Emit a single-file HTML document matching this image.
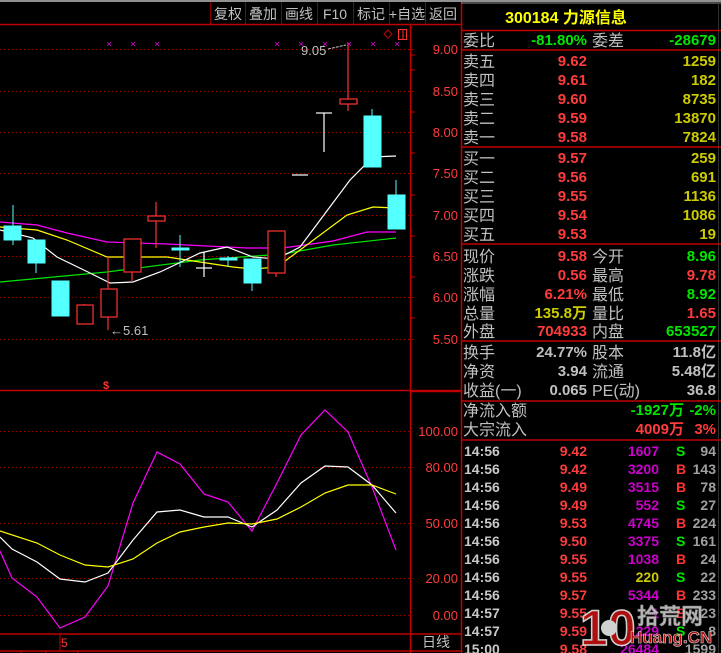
<!DOCTYPE html>
<html><head><meta charset="utf-8"><style>
html,body{margin:0;padding:0;background:#000;width:721px;height:653px;overflow:hidden}
svg{display:block}
text{font-family:"Liberation Sans","Noto Sans CJK SC",sans-serif}
.ax{fill:#ff3c3c;font-size:13px;text-anchor:end}
.lb{fill:#c0c0c0;font-size:16px}
.r{fill:#ff3c3c;font-size:15px;font-weight:bold;text-anchor:end}
.g{fill:#00e600;font-size:15px;font-weight:bold;text-anchor:end}
.y{fill:#cccc00;font-size:15px;font-weight:bold;text-anchor:end}
.w{fill:#c0c0c0;font-size:15px;font-weight:bold;text-anchor:end}
.t{fill:#c8c8c8;font-size:14px;font-weight:bold}
.tr{fill:#ff3c3c;font-size:14px;font-weight:bold;text-anchor:end}
.tp{fill:#cc00cc;font-size:14px;font-weight:bold;text-anchor:end}
.tw{fill:#a0a0a0;font-size:14px;font-weight:bold;text-anchor:end}
.tb{font-size:14px;font-weight:bold}
.tb2{fill:#c0c0c0;font-size:14px;text-anchor:middle}
</style></head><body>
<svg width="721" height="653" viewBox="0 0 721 653" xmlns="http://www.w3.org/2000/svg">
<rect width="721" height="653" fill="#000"/>
<line x1="0" y1="1" x2="721" y2="1" stroke="#909090" stroke-width="2"/>
<g stroke="#8a0000" stroke-width="1">
<line x1="210.5" y1="2" x2="210.5" y2="24"/><line x1="245.5" y1="2" x2="245.5" y2="24"/><line x1="281.5" y1="2" x2="281.5" y2="24"/><line x1="317.5" y1="2" x2="317.5" y2="24"/><line x1="353.5" y1="2" x2="353.5" y2="24"/><line x1="389.5" y1="2" x2="389.5" y2="24"/><line x1="425.5" y1="2" x2="425.5" y2="24"/>
</g>
<g class="tb2"><text x="228" y="19">复权</text><text x="263" y="19">叠加</text><text x="299" y="19">画线</text><text x="335" y="19">F10</text><text x="371" y="19">标记</text><text x="407" y="19">+自选</text><text x="443" y="19">返回</text></g>
<line x1="0" y1="24.5" x2="461" y2="24.5" stroke="#c00000" stroke-width="1.5"/>
<g stroke="#c00000" stroke-width="1.5" fill="none">
<line x1="410.5" y1="25" x2="410.5" y2="653"/>
<line x1="461.5" y1="2" x2="461.5" y2="653"/>
<line x1="0" y1="390.5" x2="410" y2="390.5"/>
<line x1="410" y1="391" x2="461" y2="391" stroke-width="2.5"/>
<line x1="0" y1="634" x2="461" y2="634"/>
<line x1="0" y1="651" x2="461" y2="651"/>
</g>
<g stroke="#c00000" stroke-width="1">
<line x1="410" y1="55" x2="415" y2="55"/><line x1="410" y1="70" x2="415" y2="70"/><line x1="410" y1="112" x2="415" y2="112"/><line x1="410" y1="153" x2="415" y2="153"/><line x1="410" y1="195" x2="415" y2="195"/><line x1="410" y1="236" x2="415" y2="236"/><line x1="410" y1="277" x2="415" y2="277"/><line x1="410" y1="318" x2="415" y2="318"/>
<line x1="21" y1="651" x2="21" y2="653"/><line x1="46" y1="651" x2="46" y2="653"/><line x1="78" y1="651" x2="78" y2="653"/>
</g>
<g stroke="#a00000" stroke-width="1" stroke-dasharray="1,3">
<line x1="0" y1="49.5" x2="415" y2="49.5"/><line x1="0" y1="91.5" x2="415" y2="91.5"/><line x1="0" y1="132.5" x2="415" y2="132.5"/><line x1="0" y1="173.5" x2="415" y2="173.5"/><line x1="0" y1="215.5" x2="415" y2="215.5"/><line x1="0" y1="256.5" x2="415" y2="256.5"/><line x1="0" y1="297.5" x2="415" y2="297.5"/><line x1="0" y1="339.5" x2="415" y2="339.5"/>
<line x1="0" y1="431.5" x2="410" y2="431.5"/><line x1="0" y1="467.5" x2="410" y2="467.5"/><line x1="0" y1="523.5" x2="410" y2="523.5"/><line x1="0" y1="578.5" x2="410" y2="578.5"/><line x1="0" y1="615.5" x2="410" y2="615.5"/>
</g>
<g class="ax">
<text x="458" y="54">9.00</text><text x="458" y="96">8.50</text><text x="458" y="137">8.00</text><text x="458" y="178">7.50</text><text x="458" y="220">7.00</text><text x="458" y="261">6.50</text><text x="458" y="302">6.00</text><text x="458" y="344">5.50</text>
<text x="458" y="436">100.00</text><text x="458" y="472">80.00</text><text x="458" y="528">50.00</text><text x="458" y="583">20.00</text><text x="458" y="620">0.00</text>
</g>
<text x="436" y="647" class="tb2">日线</text>
<text x="61" y="647" fill="#ff3c3c" font-size="12">5</text>
<line x1="60" y1="634" x2="60" y2="651" stroke="#c00000"/>
<g fill="none" stroke-width="1.2">
<polyline stroke="#ff00ff" points="0,222 37,225 67,233 107,242 167,244 247,248 283,248 333,241 367,232 396,232"/>
<polyline stroke="#00e600" points="0,282 107,272 200,260 283,254 333,245 396,238"/>
<polyline stroke="#ffff00" points="0,227 37,230 67,240 107,257 167,257 200,262 233,267 253,269 277,267 300,250 347,215 373,207 396,208"/>
<polyline stroke="#ffffff" points="0,230 33,238 57,257 90,273 110,283 133,282 160,272 200,253 227,247 253,257 277,259 300,247 350,180 373,157 396,156"/>
</g>
<g stroke="#54ffff" fill="#54ffff">
<line x1="13" y1="205" x2="13" y2="245"/><rect x="4" y="226" width="17" height="14"/>
<line x1="36" y1="240" x2="36" y2="273"/><rect x="28" y="240" width="17" height="23"/>
<rect x="52" y="281" width="17" height="35"/>
<line x1="180" y1="235" x2="180" y2="267"/><rect x="172" y="248" width="17" height="2"/>
<line x1="228" y1="256" x2="228" y2="267"/><rect x="220" y="258" width="17" height="2"/>
<line x1="252" y1="259" x2="252" y2="291"/><rect x="244" y="259" width="17" height="24"/>
<line x1="372" y1="109" x2="372" y2="167"/><rect x="364" y="116" width="17" height="51"/>
<line x1="396" y1="180" x2="396" y2="229"/><rect x="388" y="195" width="17" height="34"/>
</g>
<g stroke="#ff3232" fill="#000" stroke-width="1.2">
<line x1="84" y1="304" x2="84" y2="306"/><rect x="77" y="305" width="16" height="19"/>
<line x1="108" y1="257" x2="108" y2="330"/><rect x="101" y="289" width="16" height="28"/>
<line x1="132" y1="272" x2="132" y2="281"/><rect x="124" y="239" width="17" height="33"/>
<line x1="156" y1="202" x2="156" y2="248"/><rect x="148" y="216" width="17" height="5"/>
<line x1="276" y1="273" x2="276" y2="277"/><rect x="268" y="231" width="17" height="42"/>
<line x1="348" y1="43" x2="348" y2="111"/><rect x="340" y="99" width="17" height="5"/>
</g>
<g stroke="#fff" stroke-width="1.2">
<line x1="196" y1="268" x2="212" y2="268"/><line x1="204" y1="252" x2="204" y2="277"/>
<line x1="292" y1="175" x2="308" y2="175"/>
<line x1="316" y1="113" x2="332" y2="113"/><line x1="324" y1="113" x2="324" y2="152"/>
</g>
<g fill="#ff00ff" font-size="9" text-anchor="middle">
<text x="109" y="47">×</text><text x="133" y="47">×</text><text x="157" y="47">×</text><text x="277" y="47">×</text><text x="301" y="47">×</text><text x="325" y="47">×</text><text x="349" y="47">×</text><text x="373" y="47">×</text><text x="397" y="47">×</text>
</g>
<text x="301" y="55" fill="#c0c0c0" font-size="13">9.05</text>
<line x1="328" y1="49" x2="346" y2="45" stroke="#c0c0c0" stroke-dasharray="3,1"/>
<path d="M384 34 L388 30 L392 34 L388 38 Z" fill="none" stroke="#c00000"/>
<rect x="398.5" y="29.5" width="8" height="10" fill="none" stroke="#ff3232"/>
<line x1="403" y1="30" x2="403" y2="39" stroke="#ff3232"/>
<text x="110" y="335" fill="#c0c0c0" font-size="13">←5.61</text>
<text x="103" y="389" fill="#ff3232" font-size="11" font-weight="bold">$</text>
<g fill="none" stroke-width="1.2">
<polyline stroke="#ff00ff" points="0,551 12,578 37,597 60,628 85,617 108,586 133,503 157,452 180,464 204,494 228,502 252,531 277,483 301,435 325,410 348,432 372,487 396,550"/>
<polyline stroke="#ffffff" points="0,537 12,549 37,562 60,579 85,582 108,573 133,540 157,512 180,510 204,517 228,517 252,527 277,510 301,483 325,466 348,467 372,485 396,513"/>
<polyline stroke="#ffff00" points="0,531 37,543 60,555 85,565 108,567 133,559 157,543 180,532 204,527 228,523 252,524 277,519 301,507 325,493 348,485 372,485 396,494"/>
</g>
<line x1="461" y1="3" x2="721" y2="3" stroke="#909090"/>
<line x1="718.5" y1="3" x2="718.5" y2="653" stroke="#303030"/>
<text x="566" y="23" fill="#ffff00" font-size="16" font-weight="bold" text-anchor="middle">300184 力源信息</text>
<g stroke="#c00000" stroke-width="1.5">
<line x1="461" y1="30.5" x2="721" y2="30.5"/><line x1="461" y1="50" x2="721" y2="50"/><line x1="461" y1="147" x2="721" y2="147"/><line x1="461" y1="244" x2="721" y2="244"/><line x1="461" y1="341" x2="721" y2="341"/><line x1="461" y1="401" x2="721" y2="401"/><line x1="461" y1="440" x2="721" y2="440"/>
</g>
<g class="lb">
<text x="463" y="46">委比</text><text x="592" y="46">委差</text>
<text x="463" y="67">卖五</text><text x="463" y="86">卖四</text><text x="463" y="105">卖三</text><text x="463" y="124">卖二</text><text x="463" y="143">卖一</text>
<text x="463" y="164">买一</text><text x="463" y="183">买二</text><text x="463" y="202">买三</text><text x="463" y="221">买四</text><text x="463" y="240">买五</text>
<text x="463" y="262">现价</text><text x="592" y="262">今开</text>
<text x="463" y="281">涨跌</text><text x="592" y="281">最高</text>
<text x="463" y="300">涨幅</text><text x="592" y="300">最低</text>
<text x="463" y="319">总量</text><text x="592" y="319">量比</text>
<text x="463" y="337">外盘</text><text x="592" y="337">内盘</text>
<text x="463" y="358">换手</text><text x="592" y="358">股本</text>
<text x="463" y="377">净资</text><text x="592" y="377">流通</text>
<text x="463" y="396">收益(一)</text><text x="592" y="396">PE(动)</text>
<text x="463" y="416">净流入额</text><text x="463" y="435">大宗流入</text>
</g>
<text x="587" y="45" class="g">-81.80%</text><text x="716" y="45" class="g">-28679</text>
<g class="r"><text x="587" y="66">9.62</text><text x="587" y="85">9.61</text><text x="587" y="104">9.60</text><text x="587" y="123">9.59</text><text x="587" y="142">9.58</text>
<text x="587" y="163">9.57</text><text x="587" y="182">9.56</text><text x="587" y="201">9.55</text><text x="587" y="220">9.54</text><text x="587" y="239">9.53</text></g>
<g class="y"><text x="716" y="66">1259</text><text x="716" y="85">182</text><text x="716" y="104">8735</text><text x="716" y="123">13870</text><text x="716" y="142">7824</text>
<text x="716" y="163">259</text><text x="716" y="182">691</text><text x="716" y="201">1136</text><text x="716" y="220">1086</text><text x="716" y="239">19</text></g>
<text x="587" y="261" class="r">9.58</text><text x="716" y="261" class="g">8.96</text>
<text x="587" y="280" class="r">0.56</text><text x="716" y="280" class="r">9.78</text>
<text x="587" y="299" class="r">6.21%</text><text x="716" y="299" class="g">8.92</text>
<text x="587" y="318" class="y">135.8万</text><text x="716" y="318" class="r">1.65</text>
<text x="587" y="336" class="r">704933</text><text x="716" y="336" class="g">653527</text>
<text x="587" y="357" class="w">24.77%</text><text x="716" y="357" class="w">11.8亿</text>
<text x="587" y="376" class="w">3.94</text><text x="716" y="376" class="w">5.48亿</text>
<text x="587" y="395" class="w">0.065</text><text x="716" y="395" class="w">36.8</text>
<text x="684" y="415" class="g">-1927万</text><text x="716" y="415" class="g">-2%</text>
<text x="684" y="434" class="r">4009万</text><text x="716" y="434" class="r">3%</text>
<g class="t"><text x="464" y="456">14:56</text><text x="464" y="474">14:56</text><text x="464" y="492">14:56</text><text x="464" y="510">14:56</text><text x="464" y="528">14:56</text><text x="464" y="546">14:56</text><text x="464" y="564">14:56</text><text x="464" y="582">14:56</text><text x="464" y="600">14:56</text><text x="464" y="618">14:57</text><text x="464" y="636">14:57</text><text x="464" y="654">15:00</text></g>
<g class="tr"><text x="587" y="456">9.42</text><text x="587" y="474">9.42</text><text x="587" y="492">9.49</text><text x="587" y="510">9.49</text><text x="587" y="528">9.53</text><text x="587" y="546">9.50</text><text x="587" y="564">9.55</text><text x="587" y="582">9.55</text><text x="587" y="600">9.57</text><text x="587" y="618">9.55</text><text x="587" y="636">9.59</text><text x="587" y="654">9.58</text></g>
<g class="tp"><text x="659" y="456">1607</text><text x="659" y="474">3200</text><text x="659" y="492">3515</text><text x="659" y="510">552</text><text x="659" y="528">4745</text><text x="659" y="546">3375</text><text x="659" y="564">1038</text><text x="659" y="582" style="fill:#cccc00">220</text><text x="659" y="600">5344</text><text x="659" y="618">1</text><text x="659" y="636">229</text><text x="659" y="654">26484</text></g>
<g class="tb"><text x="676" y="456" fill="#00e600">S</text><text x="676" y="474" fill="#ff3232">B</text><text x="676" y="492" fill="#ff3232">B</text><text x="676" y="510" fill="#00e600">S</text><text x="676" y="528" fill="#ff3232">B</text><text x="676" y="546" fill="#00e600">S</text><text x="676" y="564" fill="#ff3232">B</text><text x="676" y="582" fill="#00e600">S</text><text x="676" y="600" fill="#ff3232">B</text><text x="676" y="618" fill="#ff3232">B</text><text x="676" y="636" fill="#00e600">S</text></g>
<g class="tw"><text x="716" y="456">94</text><text x="716" y="474">143</text><text x="716" y="492">78</text><text x="716" y="510">27</text><text x="716" y="528">224</text><text x="716" y="546">161</text><text x="716" y="564">24</text><text x="716" y="582">22</text><text x="716" y="600">233</text><text x="716" y="618">23</text><text x="716" y="636">8</text><text x="716" y="654">1599</text></g>
<g opacity="0.9">
<text x="580" y="645" fill="#c01010" font-size="50" font-weight="bold" stroke="#e8e8e8" stroke-width="1.5" font-family="Liberation Sans, sans-serif">10</text>
<circle cx="609" cy="628" r="8" fill="#e8e8e8"/>
<text x="637" y="624" fill="#c8c8c8" font-size="22" font-weight="bold" stroke="#888" stroke-width="0.5">拾荒网</text>
<text x="630" y="643" fill="#c01010" font-size="17" font-weight="bold" stroke="#eee" stroke-width="0.6">Huang.CN</text>
</g>
</svg>
</body></html>
